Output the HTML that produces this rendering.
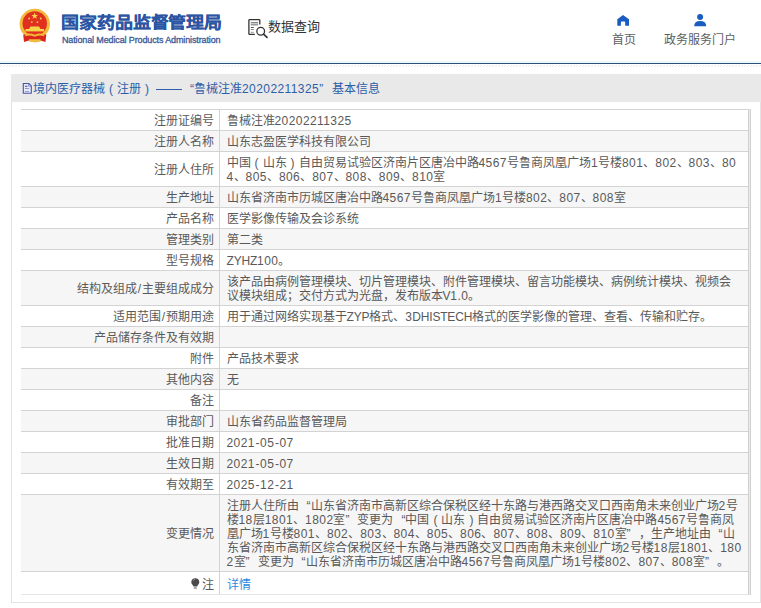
<!DOCTYPE html>
<html lang="zh-CN">
<head>
<meta charset="utf-8">
<style>
*{margin:0;padding:0;box-sizing:border-box;}
html,body{width:761px;height:608px;overflow:hidden;background:#fff;}
body{font-family:"Liberation Sans",sans-serif;font-size:12px;color:#555;position:relative;}
.abs{position:absolute;}
#hdr{left:0;top:0;width:761px;height:62px;background:#fff;}
#cy{left:0;top:61px;width:761px;height:2px;background:#ecf9fc;}
#bl{left:0;top:63px;width:761px;height:1px;background:#2c4f7c;}
#hatch{left:0;top:65px;width:761px;height:2px;background:repeating-linear-gradient(135deg,#fff 0,#fff 1.4px,#e8e8e8 1.4px,#e8e8e8 2.12px);}
#t1{left:61px;top:9px;font-size:18px;font-weight:700;color:#2a55a3;-webkit-text-stroke:0.2px #2a55a3;line-height:24px;white-space:nowrap;letter-spacing:-0.1px;transform-origin:0 100%;transform:scaleY(0.86);}
#t2{left:62px;top:34px;font-size:9px;color:#3a5897;line-height:12px;white-space:nowrap;letter-spacing:-0.13px;-webkit-text-stroke:0.3px #3a5897;}
#q{left:268px;top:17px;font-size:13px;color:#333;line-height:20px;white-space:nowrap;}
.nav{font-size:12px;color:#5e5e5e;line-height:14px;white-space:nowrap;}
#panel{left:11px;top:74px;width:750px;height:529px;background:#fff;border:1px solid #e3e3e3;}
#ph{left:11px;top:74px;width:760px;height:28px;background:#e9e9e9;}
#ptitle{left:33px;top:81px;font-size:12px;color:#2d5ea8;line-height:16px;white-space:nowrap;}
#ptitle .n{letter-spacing:0.42px}
#ptitle .qc{width:13px}
table{position:absolute;left:21px;top:109px;width:727px;border-collapse:collapse;border-top:1px solid #d3d3d3;}
td{border-bottom:1px solid #d3d3d3;padding:4px 6px 2px 7px;line-height:14px;vertical-align:middle;white-space:nowrap;color:#595959;}
td.l{width:198px;text-align:right;border-right:1px solid #d3d3d3;padding:4px 4.5px 2px 0;}
tr:nth-child(even) td{background:#f6f6f6;}
tr.last td{height:23px;padding-top:5px;padding-bottom:1px;border-bottom-color:#e6e6e6;}
.bulb{vertical-align:0px;margin-right:2.5px;}
#rb{left:748px;top:109px;width:3px;height:486px;background:#ececec;border-left:1px solid #cfcfcf;border-right:1px solid #cfcfcf;}
a{color:#2b8ae0;text-decoration:none;}
.n{letter-spacing:0.42px;}
.m{letter-spacing:-0.2px;}
.sl{margin:0 0.8px 0 0.6px;}
.hy{margin:0 0.6px;}
.pw{display:inline-block;width:12px;text-align:center;}
.qo{display:inline-block;width:12px;text-align:right;}
.qc{display:inline-block;width:12px;text-align:left;}
</style>
</head>
<body>
<div id="hdr" class="abs"></div>
<!-- emblem -->
<svg class="abs" style="left:0;top:0" width="60" height="50" viewBox="0 0 60 50">
  <circle cx="34.75" cy="24" r="15.2" fill="#f2bb3a"/>
  <circle cx="34.75" cy="23.5" r="12.2" fill="#e0301f"/>
  <polygon points="34.7,12.6 35.6,14.9 38,15 36.1,16.5 36.8,18.8 34.7,17.5 32.6,18.8 33.3,16.5 31.4,15 33.8,14.9" fill="#f7d54a"/>
  <circle cx="29.1" cy="18.5" r="0.9" fill="#f7d54a"/>
  <circle cx="40.7" cy="18.5" r="0.9" fill="#f7d54a"/>
  <circle cx="31.8" cy="22.1" r="0.9" fill="#f7d54a"/>
  <circle cx="37.4" cy="22.1" r="0.9" fill="#f7d54a"/>
  <path d="M29 29 L30.5 26.6 L39 26.6 L40.5 29 Z" fill="#f7d54a"/>
  <rect x="25.5" y="29" width="18.5" height="2.4" fill="#f7d54a"/>
  <path d="M23.2 34.5 L24 42 L29 40.5 L34.75 42.3 L40.5 40.5 L45.5 42 L46.3 34.5 Z" fill="#d8281e"/>
  <path d="M25 34.5 Q30 32.5 34.75 34.8 Q39.5 32.5 44.5 34.5 L44 36.3 Q39.5 34.6 34.75 36.8 Q30 34.6 25.5 36.3 Z" fill="#f2bb3a"/>
  <path d="M29 39.3 H40.5 V41.6 Q34.75 42.8 29 41.6 Z" fill="#f2bb3a"/>
</svg>
<div id="t1" class="abs">国家药品监督管理局</div>
<div id="t2" class="abs">National Medical Products Administration</div>
<!-- query icon -->
<svg class="abs" style="left:244px;top:15px" width="28" height="26" viewBox="0 0 28 26">
  <path d="M10.8 19.4 H5.6 Q4.9 19.4 4.9 18.7 V5.4 Q4.9 4.7 5.6 4.7 H15.1 Q15.8 4.7 15.8 5.4 V9.6" fill="none" stroke="#333" stroke-width="1.3"/>
  <rect x="6.8" y="7.2" width="7.3" height="0.8" fill="#666"/>
  <rect x="6.8" y="8.5" width="7.3" height="2" fill="#999"/>
  <rect x="6.8" y="12" width="3" height="0.9" fill="#444"/>
  <rect x="6.8" y="14" width="3" height="0.9" fill="#777"/>
  <rect x="6.8" y="16.8" width="3" height="0.9" fill="#888"/>
  <circle cx="16.7" cy="16.3" r="3.85" fill="#fff" stroke="#333" stroke-width="1.3"/>
  <path d="M19.6 19.1 L23 22.3" stroke="#333" stroke-width="1.7" stroke-linecap="round"/>
</svg>
<div id="q" class="abs">数据查询</div>
<!-- home -->
<svg class="abs" style="left:617px;top:14px" width="13" height="13" viewBox="0 0 13 13">
  <path d="M6 0.9 L12 5.3 V11.8 H8.2 V8.3 Q8.2 7.4 7.3 7.4 H4.8 Q3.9 7.4 3.9 8.3 V11.8 H0.3 V5.3 Z" fill="#1a5cbf"/>
</svg>
<div class="abs nav" style="left:612px;top:33px">首页</div>
<svg class="abs" style="left:694px;top:13px" width="13" height="14" viewBox="0 0 13 14">
  <circle cx="6.1" cy="3.9" r="3" fill="#1a5cbf"/>
  <path d="M0.2 13.3 Q0.2 7.9 6.1 7.9 Q12.2 7.9 12.2 13.3 Z" fill="#1a5cbf"/>
</svg>
<div class="abs nav" style="left:663.5px;top:33px">政务服务门户</div>

<div id="cy" class="abs"></div>
<div id="bl" class="abs"></div>
<div id="hatch" class="abs"></div>

<div id="panel" class="abs"></div>
<div id="ph" class="abs"></div>
<svg class="abs" style="left:22px;top:82px" width="11" height="13" viewBox="0 0 11 13">
  <path d="M1.3 1.5 H6.9 L9.3 3.9 V11.3 H1.3 Z" fill="#e4e9fa" stroke="#4b52a8" stroke-width="1.1"/>
  <path d="M6.6 1.5 L6.6 4.2 H9.3" fill="none" stroke="#6a74c8" stroke-width="0.7"/>
  <rect x="3" y="3.8" width="2.4" height="0.9" fill="#3a3f80"/>
  <rect x="3" y="6.2" width="4" height="0.8" fill="#7a80b0"/>
  <rect x="3" y="9" width="4" height="0.8" fill="#8a90c0"/>
</svg>
<div id="ptitle" class="abs">境内医疗器械<span class="pw">(</span>注册<span class="pw">)</span><span style="display:inline-block;width:29px;position:relative;height:12px;vertical-align:middle"><span style="position:absolute;left:3px;top:5px;width:26px;height:1px;background:#2d5ea8"></span></span><span class="qo">“</span>鲁械注准<span class="n">20202211325</span><span class="qc">”</span>基本信息</div>

<table>
<tr><td class="l">注册证编号</td><td class="c">鲁械注准<span class="n">20202211325</span></td></tr>
<tr><td class="l">注册人名称</td><td class="c">山东志盈医学科技有限公司</td></tr>
<tr><td class="l">注册人住所</td><td class="c">中国<span class="pw">(</span>山东<span class="pw">)</span>自由贸易试验区济南片区唐冶中路<span class="n">4567</span>号鲁商凤凰广场<span class="n">1</span>号楼<span class="n">801</span>、<span class="n">802</span>、<span class="n">803</span>、<span class="n">80</span><br><span class="n">4</span>、<span class="n">805</span>、<span class="n">806</span>、<span class="n">807</span>、<span class="n">808</span>、<span class="n">809</span>、<span class="n">810</span>室</td></tr>
<tr><td class="l">生产地址</td><td class="c">山东省济南市历城区唐冶中路<span class="n">4567</span>号鲁商凤凰广场<span class="n">1</span>号楼<span class="n">802</span>、<span class="n">807</span>、<span class="n">808</span>室</td></tr>
<tr><td class="l">产品名称</td><td class="c">医学影像传输及会诊系统</td></tr>
<tr><td class="l">管理类别</td><td class="c">第二类</td></tr>
<tr><td class="l">型号规格</td><td class="c"><span class="m">ZYHZ</span><span class="n">100</span>。</td></tr>
<tr><td class="l">结构及组成<span class="sl">/</span>主要组成成分</td><td class="c">该产品由病例管理模块、切片管理模块、附件管理模块、留言功能模块、病例统计模块、视频会<br>议模块组成；交付方式为光盘，发布版本<span class="m">V</span><span class="n">1.0</span>。</td></tr>
<tr><td class="l">适用范围<span class="sl">/</span>预期用途</td><td class="c">用于通过网络实现基于<span class="m">ZYP</span>格式、<span class="n">3</span><span class="m">DHISTECH</span>格式的医学影像的管理、查看、传输和贮存。</td></tr>
<tr><td class="l">产品储存条件及有效期</td><td class="c"></td></tr>
<tr><td class="l">附件</td><td class="c">产品技术要求</td></tr>
<tr><td class="l">其他内容</td><td class="c">无</td></tr>
<tr><td class="l">备注</td><td class="c"></td></tr>
<tr><td class="l">审批部门</td><td class="c">山东省药品监督管理局</td></tr>
<tr><td class="l">批准日期</td><td class="c"><span class="n">2021</span><span class="hy">-</span><span class="n">05</span><span class="hy">-</span><span class="n">07</span></td></tr>
<tr><td class="l">生效日期</td><td class="c"><span class="n">2021</span><span class="hy">-</span><span class="n">05</span><span class="hy">-</span><span class="n">07</span></td></tr>
<tr><td class="l">有效期至</td><td class="c"><span class="n">2025</span><span class="hy">-</span><span class="n">12</span><span class="hy">-</span><span class="n">21</span></td></tr>
<tr><td class="l">变更情况</td><td class="c">注册人住所由<span class="qo">“</span>山东省济南市高新区综合保税区经十东路与港西路交叉口西南角未来创业广场<span class="n">2</span>号<br>楼<span class="n">18</span>层<span class="n">1801</span>、<span class="n">1802</span>室<span class="qc">”</span>变更为<span class="qo">“</span>中国<span class="pw">(</span>山东<span class="pw">)</span>自由贸易试验区济南片区唐冶中路<span class="n">4567</span>号鲁商凤<br>凰广场<span class="n">1</span>号楼<span class="n">801</span>、<span class="n">802</span>、<span class="n">803</span>、<span class="n">804</span>、<span class="n">805</span>、<span class="n">806</span>、<span class="n">807</span>、<span class="n">808</span>、<span class="n">809</span>、<span class="n">810</span>室<span class="qc">”</span>，生产地址由<span class="qo">“</span>山<br>东省济南市高新区综合保税区经十东路与港西路交叉口西南角未来创业广场<span class="n">2</span>号楼<span class="n">18</span>层<span class="n">1801</span>、<span class="n">180</span><br><span class="n">2</span>室<span class="qc">”</span>变更为<span class="qo">“</span>山东省济南市历城区唐冶中路<span class="n">4567</span>号鲁商凤凰广场<span class="n">1</span>号楼<span class="n">802</span>、<span class="n">807</span>、<span class="n">808</span>室<span class="qc">”</span>。</td></tr>
<tr class="last"><td class="l"><svg class="bulb" width="9" height="11" viewBox="0 0 9 11"><path d="M4.3 0.2 C6.7 0.2 8.3 1.9 8.3 4.1 C8.3 5.6 7.5 6.5 6.6 7.4 L6.2 8.6 H2.4 L2 7.4 C1.1 6.5 0.3 5.6 0.3 4.1 C0.3 1.9 1.9 0.2 4.3 0.2 Z" fill="#4a4a4a"/><path d="M2.4 2.6 Q2.8 1.6 3.8 1.3" stroke="#bbb" stroke-width="0.8" fill="none"/><rect x="2.7" y="9.4" width="3.2" height="1.2" rx="0.5" fill="#555"/></svg>注</td><td class="c"><a>详情</a></td></tr>
</table>
<div id="rb" class="abs"></div>
</body>
</html>
